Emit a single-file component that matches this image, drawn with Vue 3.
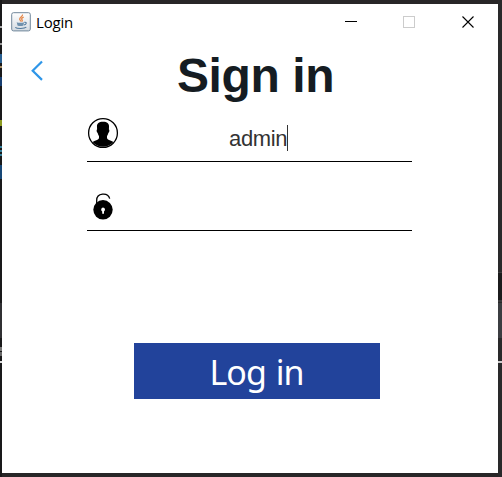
<script setup>
import { ref } from 'vue'

const title = ref('Login')
const username = ref('admin')
const leftMarks = [
  { y: 26, h: 2, c: '#aaaaaa' },
  { y: 43, h: 2, c: '#999999' },
  { y: 54, h: 9, c: '#285f91' },
  { y: 66, h: 2, c: '#a58b63' },
  { y: 77, h: 9, c: '#173e70' },
  { y: 120, h: 6, c: '#8c9a21' },
  { y: 146, h: 2, c: '#347f9a' },
  { y: 150, h: 2, c: '#347f9a' },
  { y: 154, h: 2, c: '#347f9a' },
  { y: 165, h: 14, c: '#174777' },
  { y: 303, h: 35, c: '#303033' },
  { y: 347, h: 4, c: '#777777' },
  { y: 352, h: 4, c: '#666666' },
  { y: 361, h: 2, c: '#dddddd' },
]
const rightMarks = [
  { y: 272, h: 1, c: '#3c3c3e' },
  { y: 273, h: 27, c: '#1b1b1c' },
  { y: 300, h: 2, c: '#3a3a3c' },
  { y: 303, h: 35, c: '#3b3d41' },
  { y: 361, h: 2, c: '#cccccc' },
]
</script>

<template>
  <div class="desktop">
    <svg class="edge left" width="2" height="477">
      <rect width="2" height="477" fill="#19191a" />
      <rect v-for="m in leftMarks" :key="m.y" :y="m.y" width="2" :height="m.h" :fill="m.c" />
    </svg>
    <main class="window">
      <header class="titlebar">
        <svg class="java" width="20" height="20" viewBox="0 0 20 20">
          <defs>
            <linearGradient id="tile" x1="0" y1="0" x2="0" y2="1">
              <stop offset="0" stop-color="#ffffff" />
              <stop offset="1" stop-color="#d3dae1" />
            </linearGradient>
          </defs>
          <rect x=".7" y=".7" width="18.6" height="18.2" rx="1.8" fill="url(#tile)" stroke="#71879b" />
          <path d="M11.5 2.5c.7 2-3.4 2.9-2.8 4.8.2.8 1.2 1.1.8 2.1M12.7 5.2c-2.2 1-2.6 1.8-1.7 2.6.6.6.2 1.2-.4 1.8" fill="none" stroke="#e58a4e" stroke-width="1.3" />
          <path d="M5.7 10.2c1.3.8 5.7.8 7.4.1l-.7 3.2c-1.5.8-4.3.8-5.9.1z" fill="#6f91ae" />
          <path d="M13.3 10.4c3-.6 2.2 2.1-.4 2.6M4.3 15.4c1.7 1.6 9.2 1.5 11-.2" fill="none" stroke="#547b9e" stroke-width="1.1" />
        </svg>
        <span class="title">{{ title }}</span>
        <svg class="controls" width="130" height="14" viewBox="0 0 130 14" shape-rendering="crispEdges">
          <path d="M0 6.5h12" stroke="#000" />
          <rect x="58.5" y="1.5" width="11" height="11" fill="none" stroke="#cccccc" />
          <path d="M117.5 1.5l11 11M128.5 1.5l-11 11" stroke="#000" shape-rendering="auto" stroke-width="1.1" />
        </svg>
      </header>
      <section class="heading">
        <svg class="back" width="14" height="22" viewBox="0 0 14 22">
          <path d="M12 1.5L2.7 10.7l9.3 9.2" fill="none" stroke="#2f96e8" stroke-width="2.2" />
        </svg>
        <h1>Sign in</h1>
      </section>
      <form class="form" @submit.prevent>
        <div class="field user">
          <svg width="32" height="32" viewBox="0 0 32 32">
            <circle cx="16" cy="16" r="14.4" fill="#fff" stroke="#000" stroke-width="1.3" />
            <path d="M16 4.8c4.6 0 6.3 2 6 5.4l-.1 2.3c.9.2.4 2.8-.6 3.4-.3 1.5-.8 2.400-1.300 3.200v2.200c.8 2 4 2.200 6.500 3.800A14.400 14.400 0 0 1 5.500 25.100c2.500-1.600 5.700-1.800 6.500-3.800v-2.200c-.5-.8-1-1.700-1.300-3.200-1-.6-1.500-3.200-.6-3.400L10 10.200C9.700 6.800 11.400 4.800 16 4.800z" />
          </svg>
          <span class="value">{{ username }}</span><i class="caret"></i>
        </div>
        <div class="field password">
          <svg width="32" height="32" viewBox="0 0 32 32">
            <path d="M9.7 13.5V8.200C9.700 1 20.700-.3 22.700 6.600" fill="none" stroke="#000" stroke-width="1.3" />
            <circle cx="16" cy="17.800" r="9.700" />
            <path d="M16 15.500a2.100 2.100 0 0 1 1 3.900v2.400h-1.800v-2.400A2.100 2.100 0 0 1 16 15.500z" fill="#fff" />
          </svg>
        </div>
        <button type="submit"><span>Log in</span></button>
      </form>
    </main>
    <svg class="edge right" width="4" height="477">
      <rect width="4" height="477" fill="#29292a" />
      <rect v-for="m in rightMarks" :key="m.y" :y="m.y" width="4" :height="m.h" :fill="m.c" />
    </svg>
  </div>
</template>

<style>
body { margin: 0; overflow: hidden; }
</style>

<style scoped>
.desktop { display: flex; width: 502px; height: 477px; background: #282627; }
.edge { display: block; flex: none; }
.window { width: 496px; height: 469px; margin-top: 4px; background: #fff; overflow: hidden; }
.titlebar { display: flex; align-items: flex-start; height: 36px; }
.java { flex: none; margin: 8px 0 0 9px; }
.title { margin: 8px 0 0 5px; width: 70px; font: 15px/21px "Open Sans", "Noto Sans", sans-serif; color: #000; letter-spacing: -0.2px; }
.controls { margin: 11px 0 0 239px; flex: none; }
.heading { display: flex; height: 74px; }
.back { margin: 20px 0 0 28px; flex: none; }
h1 { margin: 8px 0 0 133px; font: bold 48px/55px "Liberation Sans", Arial, sans-serif; letter-spacing: -0.4px; color: #151c22; white-space: nowrap; }
.form { display: flex; flex-direction: column; width: 325px; margin-left: 85px; }
.field { box-sizing: border-box; display: flex; border-bottom: 1px solid #000; }
.field svg { flex: none; }
.user { height: 48px; padding-top: 3px; }
.value { margin: 9px 0 0 110px; font: 22px/25px "Liberation Sans", Arial, sans-serif; letter-spacing: -0.35px; color: #333; }
.caret { width: 1px; height: 26px; margin-top: 8px; background: #333; }
.password { height: 69px; padding-top: 30px; }
button { width: 246px; height: 56px; margin: 112px 0 0 47px; padding: 0; border: 0; background: #22439b; color: #fff; font: 34px/56px "Noto Sans", "Open Sans", sans-serif; letter-spacing: -1px; word-spacing: 2px; }
button span { display: block; padding: 1px 1px 0 0; }
</style>
